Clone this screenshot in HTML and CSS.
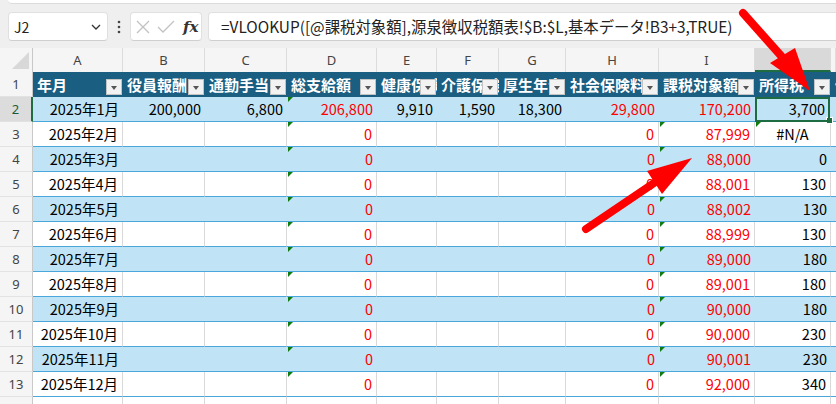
FILE: index.html
```html
<!DOCTYPE html>
<html lang="ja">
<head>
  <meta charset="UTF-8">
  <title>源泉徴収 - 所得税</title>
  <link rel="stylesheet" href="styles.css">
</head>
<body>
  <!-- リボンの下端 -->
  <div class="ribbon-edge"></div>

  <!-- 名前ボックスと数式バー -->
  <div class="formula-row">
    <div class="name-box">
      <span>J2</span>
      <svg width="10" height="6" viewBox="0 0 10 6"><path d="M1 1 L5 5 L9 1" fill="none" stroke="#333" stroke-width="1.3"/></svg>
    </div>
    <div class="kebab">
      <svg width="4" height="14" viewBox="0 0 4 14"><circle cx="2" cy="2" r="1.3" fill="#444"/><circle cx="2" cy="7" r="1.3" fill="#444"/><circle cx="2" cy="12" r="1.3" fill="#444"/></svg>
    </div>
    <div class="fx-box">
      <svg width="16" height="16" viewBox="0 0 16 16"><path d="M2 2 L14 14 M14 2 L2 14" stroke="#c2c2c2" stroke-width="1.3"/></svg>
      <svg width="18" height="16" viewBox="0 0 18 16"><path d="M1 8 L6 13 L17 2" fill="none" stroke="#c2c2c2" stroke-width="1.3"/></svg>
      <span class="fx">fx</span>
    </div>
    <div class="formula">=VLOOKUP([@課税対象額],源泉徴収税額表!$B:$L,基本データ!B3+3,TRUE)</div>
  </div>

  <!-- シート -->
  <div class="sheet">
    <div class="row col-heads">
      <div class="corner"></div>
      <div class="ch">A</div><div class="ch">B</div><div class="ch">C</div><div class="ch">D</div>
      <div class="ch">E</div><div class="ch">F</div><div class="ch">G</div><div class="ch">H</div>
      <div class="ch">I</div><div class="ch active">J</div><div class="ch"></div>
    </div>

    <div class="row head">
      <div class="rn">1</div>
      <div class="th">年月<span class="fb"></span></div>
      <div class="th">役員報酬<span class="fb"></span></div>
      <div class="th">通勤手当<span class="fb"></span></div>
      <div class="th">総支給額<span class="fb"></span></div>
      <div class="th">健康保険<span class="fb"></span></div>
      <div class="th">介護保険<span class="fb"></span></div>
      <div class="th">厚生年金<span class="fb"></span></div>
      <div class="th">社会保険料<span class="fb"></span></div>
      <div class="th">課税対象額<span class="fb"></span></div>
      <div class="th">所得税<span class="fb"></span></div>
      <div class="th">住民税</div>
    </div>

    <div class="row band">
      <div class="rn active">2</div>
      <div class="c">2025年1月</div><div class="c">200,000</div><div class="c">6,800</div>
      <div class="c red err">206,800</div><div class="c">9,910</div><div class="c">1,590</div>
      <div class="c">18,300</div><div class="c red">29,800</div><div class="c red">170,200</div>
      <div class="c sel">3,700</div><div class="c"></div>
    </div>
    <div class="row plain">
      <div class="rn">3</div>
      <div class="c">2025年2月</div><div class="c"></div><div class="c"></div>
      <div class="c red err">0</div><div class="c"></div><div class="c"></div>
      <div class="c"></div><div class="c red">0</div><div class="c red err">87,999</div>
      <div class="c err na">#N/A</div><div class="c"></div>
    </div>
    <div class="row band">
      <div class="rn">4</div>
      <div class="c">2025年3月</div><div class="c"></div><div class="c"></div>
      <div class="c red err">0</div><div class="c"></div><div class="c"></div>
      <div class="c"></div><div class="c red">0</div><div class="c red err">88,000</div>
      <div class="c">0</div><div class="c"></div>
    </div>
    <div class="row plain">
      <div class="rn">5</div>
      <div class="c">2025年4月</div><div class="c"></div><div class="c"></div>
      <div class="c red err">0</div><div class="c"></div><div class="c"></div>
      <div class="c"></div><div class="c red">0</div><div class="c red err">88,001</div>
      <div class="c">130</div><div class="c"></div>
    </div>
    <div class="row band">
      <div class="rn">6</div>
      <div class="c">2025年5月</div><div class="c"></div><div class="c"></div>
      <div class="c red err">0</div><div class="c"></div><div class="c"></div>
      <div class="c"></div><div class="c red">0</div><div class="c red err">88,002</div>
      <div class="c">130</div><div class="c"></div>
    </div>
    <div class="row plain">
      <div class="rn">7</div>
      <div class="c">2025年6月</div><div class="c"></div><div class="c"></div>
      <div class="c red err">0</div><div class="c"></div><div class="c"></div>
      <div class="c"></div><div class="c red">0</div><div class="c red err">88,999</div>
      <div class="c">130</div><div class="c"></div>
    </div>
    <div class="row band">
      <div class="rn">8</div>
      <div class="c">2025年7月</div><div class="c"></div><div class="c"></div>
      <div class="c red err">0</div><div class="c"></div><div class="c"></div>
      <div class="c"></div><div class="c red">0</div><div class="c red err">89,000</div>
      <div class="c">180</div><div class="c"></div>
    </div>
    <div class="row plain">
      <div class="rn">9</div>
      <div class="c">2025年8月</div><div class="c"></div><div class="c"></div>
      <div class="c red err">0</div><div class="c"></div><div class="c"></div>
      <div class="c"></div><div class="c red">0</div><div class="c red err">89,001</div>
      <div class="c">180</div><div class="c"></div>
    </div>
    <div class="row band">
      <div class="rn">10</div>
      <div class="c">2025年9月</div><div class="c"></div><div class="c"></div>
      <div class="c red err">0</div><div class="c"></div><div class="c"></div>
      <div class="c"></div><div class="c red">0</div><div class="c red err">90,000</div>
      <div class="c">180</div><div class="c"></div>
    </div>
    <div class="row plain">
      <div class="rn">11</div>
      <div class="c">2025年10月</div><div class="c"></div><div class="c"></div>
      <div class="c red err">0</div><div class="c"></div><div class="c"></div>
      <div class="c"></div><div class="c red">0</div><div class="c red err">90,000</div>
      <div class="c">230</div><div class="c"></div>
    </div>
    <div class="row band">
      <div class="rn">12</div>
      <div class="c">2025年11月</div><div class="c"></div><div class="c"></div>
      <div class="c red err">0</div><div class="c"></div><div class="c"></div>
      <div class="c"></div><div class="c red">0</div><div class="c red err">90,001</div>
      <div class="c">230</div><div class="c"></div>
    </div>
    <div class="row plain">
      <div class="rn">13</div>
      <div class="c">2025年12月</div><div class="c"></div><div class="c"></div>
      <div class="c red err">0</div><div class="c"></div><div class="c"></div>
      <div class="c"></div><div class="c red">0</div><div class="c red err">92,000</div>
      <div class="c">340</div><div class="c"></div>
    </div>
    <div class="row empty">
      <div class="rn">14</div>
      <div class="c"></div><div class="c"></div><div class="c"></div><div class="c"></div>
      <div class="c"></div><div class="c"></div><div class="c"></div><div class="c"></div>
      <div class="c"></div><div class="c"></div><div class="c"></div>
    </div>
  </div>

  <!-- 注釈の矢印 -->
  <svg class="arrows" width="836" height="404" viewBox="0 0 836 404">
    <line x1="743" y1="13" x2="783" y2="58" stroke="#ff0000" stroke-width="8" stroke-linecap="round"/>
    <polygon points="770,63 795,48 810,91" fill="#ff0000"/>
    <line x1="586" y1="229" x2="657" y2="181" stroke="#ff0000" stroke-width="8" stroke-linecap="round"/>
    <polygon points="647,171 662,194 692,158" fill="#ff0000"/>
  </svg>
</body>
</html>
```

FILE: styles.css
```css
body {
  margin: 0;
  width: 836px;
  height: 404px;
  overflow: hidden;
  position: relative;
  background-color: #efefef;
  font-family: "Noto Sans CJK JP", "Noto Sans", sans-serif;
  color: #000;
}

/* リボンの下端 */
.ribbon-edge {
  height: 3px;
  margin-left: 8px;
  background-color: #fff;
  border-bottom: 1px solid #dcdcdc;
  border-bottom-left-radius: 6px;
}

/* 数式バー */
.formula-row {
  display: flex;
  height: 29px;
  margin-top: 8px;
  margin-bottom: 7px;
}

.name-box,
.fx-box,
.formula {
  box-sizing: border-box;
  height: 29px;
  background-color: #fff;
  border: 1px solid #e0e0e0;
  border-bottom-color: #cfcfcf;
  border-radius: 4px;
}

.name-box {
  width: 100px;
  margin-left: 8px;
  display: flex;
  align-items: center;
  justify-content: space-between;
  padding: 0 6px 0 5px;
  font-size: 14px;
  color: #222;
}

.kebab {
  width: 22px;
  display: flex;
  align-items: center;
  justify-content: center;
}

.fx-box {
  width: 72px;
  display: flex;
  align-items: center;
  padding-left: 4px;
  gap: 6px;
}

.fx {
  font-family: "DejaVu Serif", serif;
  font-style: italic;
  font-weight: bold;
  font-size: 15px;
  color: #333;
  margin-left: 2px;
}

.formula {
  flex: 1;
  margin-left: 6px;
  margin-right: -10px;
  padding-left: 12px;
  font-size: 15.4px;
  line-height: 27px;
  color: #222;
  white-space: nowrap;
}

/* シート */
.row {
  display: grid;
  grid-template-columns: 33px 90px 82px 82px 90px 60px 62px 67px 93px 96px 76px 1fr;
  height: 25px;
}

.row > div {
  position: relative;
  box-sizing: border-box;
  white-space: nowrap;
  overflow: hidden;
}

.col-heads {
  height: 24px;
  background-color: #f5f5f5;
}

.corner {
  border-right: 1px solid #c8c8c8;
}

.corner::after {
  content: '';
  position: absolute;
  right: 3px;
  bottom: 3px;
  border-left: 17px solid transparent;
  border-bottom: 17px solid #d8d8d8;
}

.ch {
  text-align: center;
  font-family: "Noto Sans", sans-serif;
  font-size: 13px;
  line-height: 24px;
  color: #444;
  border-right: 1px solid #dcdcdc;
}

.ch.active {
  background-color: #d9d9d9;
  border-bottom: 2px solid #1e6c41;
  color: #185c37;
}

.rn {
  background-color: #f5f5f5;
  border-right: 1px solid #c8c8c8;
  border-bottom: 1px solid #e2e2e2;
  text-align: center;
  font-family: "Noto Sans", sans-serif;
  font-size: 13px;
  line-height: 24px;
  color: #444;
}

.rn.active {
  background-color: #dcdcdc;
  border-right: 2px solid #1e6c41;
  color: #185c37;
}

/* テーブル見出し */
.th {
  background-color: #1a5e82;
  color: #fff;
  font-weight: bold;
  font-size: 15px;
  line-height: 25px;
  padding-left: 4px;
}

.fb {
  position: absolute;
  right: 1px;
  bottom: 2px;
  width: 16px;
  height: 16px;
  box-sizing: border-box;
  background-color: #f2f2f2;
  border: 1px solid #c4c4c4;
}

.fb::after {
  content: '';
  position: absolute;
  left: 4px;
  top: 6px;
  border-left: 3.5px solid transparent;
  border-right: 3.5px solid transparent;
  border-top: 4px solid #555;
}

/* データ行 */
.c {
  text-align: right;
  padding: 0 4px;
  font-size: 14.5px;
  line-height: 24px;
}

.band .c {
  background-color: #c0e4f5;
  border-bottom: 1px solid #4aa7dc;
}

.plain .c {
  background-color: #fff;
  border-bottom: 1px solid #4aa7dc;
  border-right: 1px solid #d9d9d9;
}

.empty .c {
  background-color: #fff;
  border-right: 1px solid #d9d9d9;
}

.c.red {
  color: #ff0000;
}

.c.na {
  text-align: center;
}

.c.err::before {
  content: '';
  position: absolute;
  left: 1px;
  top: 0;
  border-top: 5px solid #107c10;
  border-right: 5px solid transparent;
}

/* 選択セル J2 */
.row > .c.sel {
  overflow: visible;
  z-index: 2;
  padding-right: 6px;
}

.c.sel::after {
  content: '';
  position: absolute;
  left: 0;
  top: 0;
  right: 1px;
  bottom: -1px;
  border: 2px solid #1e6c41;
}

.c.sel::before {
  content: '';
  position: absolute;
  right: -2px;
  bottom: -3px;
  width: 5px;
  height: 5px;
  background-color: #1e6c41;
  border: 1px solid #fff;
}

/* 注釈の矢印 */
.arrows {
  position: absolute;
  left: 0;
  top: 0;
  pointer-events: none;
  z-index: 5;
}
```
